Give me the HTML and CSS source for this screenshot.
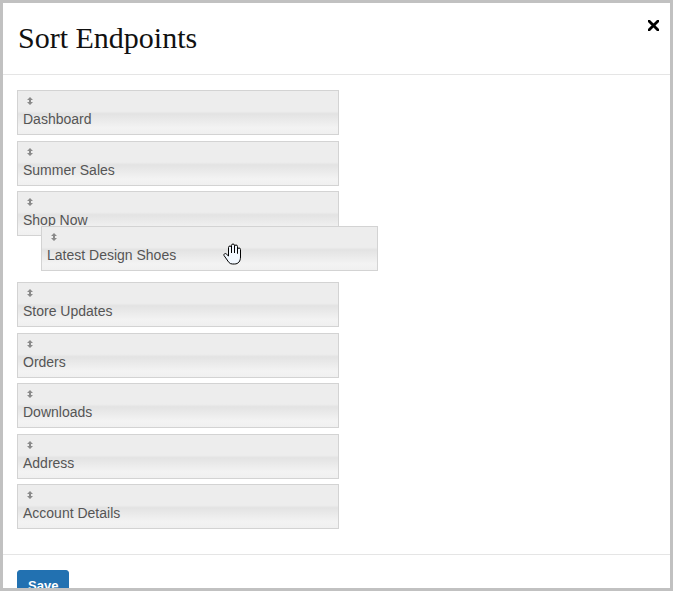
FILE: index.html
```html
<!DOCTYPE html>
<html>
<head>
<meta charset="utf-8">
<title>Sort Endpoints</title>
<link rel="stylesheet" href="styles.css">
</head>
<body>
<div class="modal">
  <div class="modal-header">
    <h4 class="modal-title">Sort Endpoints</h4>
    <svg class="close" width="11" height="11" viewBox="0 0 11 11"><path d="M1 1 L10 10 M10 1 L1 10" stroke="#000" stroke-width="2.8" stroke-linecap="square"/></svg>
  </div>
  <div class="modal-body">
    <ul class="sortable">
      <li class="item"><span class="handle"><svg width="6" height="8" viewBox="0 0 6 8"><path d="M3 0 L6 3 H4 V5 H6 L3 8 L0 5 H2 V3 H0 Z" fill="#8a8a8a"/></svg></span><span class="label">Dashboard</span></li>
      <li class="item"><span class="handle"><svg width="6" height="8" viewBox="0 0 6 8"><path d="M3 0 L6 3 H4 V5 H6 L3 8 L0 5 H2 V3 H0 Z" fill="#8a8a8a"/></svg></span><span class="label">Summer Sales</span></li>
      <li class="item"><span class="handle"><svg width="6" height="8" viewBox="0 0 6 8"><path d="M3 0 L6 3 H4 V5 H6 L3 8 L0 5 H2 V3 H0 Z" fill="#8a8a8a"/></svg></span><span class="label">Shop Now</span></li>
      <li class="placeholder"></li>
      <li class="item"><span class="handle"><svg width="6" height="8" viewBox="0 0 6 8"><path d="M3 0 L6 3 H4 V5 H6 L3 8 L0 5 H2 V3 H0 Z" fill="#8a8a8a"/></svg></span><span class="label">Store Updates</span></li>
      <li class="item"><span class="handle"><svg width="6" height="8" viewBox="0 0 6 8"><path d="M3 0 L6 3 H4 V5 H6 L3 8 L0 5 H2 V3 H0 Z" fill="#8a8a8a"/></svg></span><span class="label">Orders</span></li>
      <li class="item"><span class="handle"><svg width="6" height="8" viewBox="0 0 6 8"><path d="M3 0 L6 3 H4 V5 H6 L3 8 L0 5 H2 V3 H0 Z" fill="#8a8a8a"/></svg></span><span class="label">Downloads</span></li>
      <li class="item"><span class="handle"><svg width="6" height="8" viewBox="0 0 6 8"><path d="M3 0 L6 3 H4 V5 H6 L3 8 L0 5 H2 V3 H0 Z" fill="#8a8a8a"/></svg></span><span class="label">Address</span></li>
      <li class="item"><span class="handle"><svg width="6" height="8" viewBox="0 0 6 8"><path d="M3 0 L6 3 H4 V5 H6 L3 8 L0 5 H2 V3 H0 Z" fill="#8a8a8a"/></svg></span><span class="label">Account Details</span></li>
    </ul>
    <div class="item dragging"><span class="handle"><svg width="6" height="8" viewBox="0 0 6 8"><path d="M3 0 L6 3 H4 V5 H6 L3 8 L0 5 H2 V3 H0 Z" fill="#8a8a8a"/></svg></span><span class="label">Latest Design Shoes</span>
      <svg class="cursor" width="19" height="22" viewBox="0 0 19 22"><path d="M5.5 12 V4.5 a1.5 1.5 0 0 1 3 0 V10 V2.5 a1.5 1.5 0 0 1 3 0 V10 V3.5 a1.5 1.5 0 0 1 3 0 V10.5 V6.5 a1.5 1.5 0 0 1 3 0 V14 c0 4 -2 7 -6 7 h-2 c-3 0 -4 -2 -6 -5 l-2.5 -3.5 a1.4 1.4 0 0 1 2.2 -1.6 L5.5 13 Z" fill="#f2f8ff" stroke="#000" stroke-width="1" stroke-linejoin="round"/></svg>
    </div>
  </div>
  <div class="modal-footer">
    <button class="btn-primary">Save</button>
  </div>
</div>
</body>
</html>
```

FILE: styles.css
```css
html, body {
  margin: 0;
  padding: 0;
}
body {
  width: 673px;
  height: 591px;
  overflow: hidden;
  font-family: "Liberation Sans", Arial, sans-serif;
}
.modal {
  box-sizing: border-box;
  width: 673px;
  height: 591px;
  border: 3px solid #c1c1c1;
  background: #fff;
  overflow: hidden;
}
.modal-header {
  display: flex;
  justify-content: space-between;
  align-items: flex-start;
  padding: 18px 11px 19px 15px;
  border-bottom: 1px solid #e5e5e5;
}
.modal-title {
  margin: 0;
  font-family: "Liberation Serif", "Times New Roman", serif;
  font-weight: normal;
  font-size: 30px;
  line-height: 34px;
  color: #111;
}
.close {
  display: block;
  margin-top: -1px;
}
.modal-body {
  position: relative;
  padding: 15px 14px 19.5px 14px;
  border-bottom: 1px solid #e5e5e5;
}
.sortable {
  list-style: none;
  margin: 0;
  padding: 0;
}
.item {
  box-sizing: border-box;
  width: 322px;
  height: 45px;
  margin-bottom: 5.5px;
  padding: 0 5px;
  border: 1px solid #d3d3d3;
  background: linear-gradient(to bottom, #ededed 0%, #ededed 47%, #e3e3e3 53%, #f3f3f3 86%, #f0f0f0 100%);
  color: #555;
  font-size: 14px;
}
.handle {
  display: block;
  height: 18px;
  padding-left: 4px;
}
.handle svg {
  display: block;
  padding-top: 6px;
}
.label {
  display: block;
  line-height: 20px;
}
.placeholder {
  height: 35px;
  margin-bottom: 5.5px;
}
.dragging {
  position: absolute;
  left: 38px;
  top: 151px;
  width: 337px;
  margin: 0;
}
.cursor {
  position: absolute;
  left: 181px;
  top: 16px;
}
.modal-footer {
  padding: 15px 14px;
}
.btn-primary {
  font-family: "Liberation Sans", Arial, sans-serif;
  font-size: 13px;
  font-weight: bold;
  line-height: 18px;
  color: #fff;
  background: #2271b1;
  border: 1px solid #2271b1;
  border-radius: 3px;
  padding: 6px 10px;
  cursor: pointer;
}
```
